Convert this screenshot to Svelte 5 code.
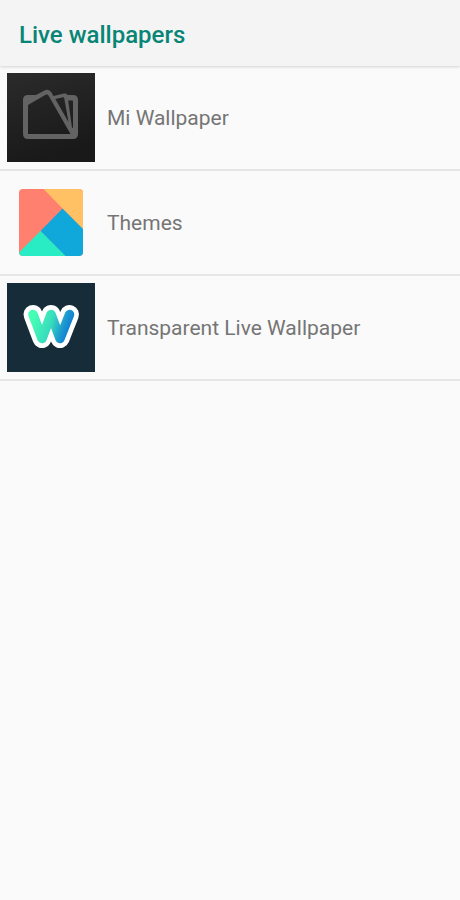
<script lang="ts">
    const wallpapers = [
        { id: 'mi', name: 'Mi Wallpaper' },
        { id: 'themes', name: 'Themes' },
        { id: 'transparent', name: 'Transparent Live Wallpaper' }
    ];

    let selected = $state('');
</script>

<header>
    <h1>Live wallpapers</h1>
</header>

<main>
    <ul>
        {#each wallpapers as wallpaper}
            <li>
                <button class:selected={selected === wallpaper.id} onclick={() => (selected = wallpaper.id)}>
                    <svg class="thumb" viewBox="0 0 88 89" aria-hidden="true">
                        {#if wallpaper.id === 'mi'}
                            <defs>
                                <linearGradient id="mi-bg" x1="0" y1="0" x2="0.3" y2="1">
                                    <stop offset="0" stop-color="#2b2b2b" />
                                    <stop offset="1" stop-color="#191919" />
                                </linearGradient>
                            </defs>
                            <rect width="88" height="89" fill="url(#mi-bg)" />
                            <path
                                fill="#636363"
                                fill-rule="evenodd"
                                d="M16 27Q16 22 21 22H29L37.500 17.500Q42 15.500 44.500 19.500L46.500 23L57 20.600Q59.500 20.300 60.500 22H66Q71 22 71 27V61Q71 66 66 66H21Q16 66 16 61Z
                                M21 32L39 21.600Q40.500 21 41.500 22.500L63.500 61H21Z
                                M48.300 26L56 24.300Q57 24.200 57.200 25.200L61.500 49Z
                                M61.200 27.500H65Q66 27.500 66 28.500V55L65 54.500Z"
                            />
                        {:else if wallpaper.id === 'themes'}
                            <defs>
                                <clipPath id="themes-clip">
                                    <rect x="12" y="11" width="64" height="67" rx="4" />
                                </clipPath>
                            </defs>
                            <g clip-path="url(#themes-clip)">
                                <rect x="12" y="11" width="64" height="67" fill="#ff806f" />
                                <path fill="#ffc163" d="M36.500 11H76V51.500Z" />
                                <path fill="#10a8db" d="M55.500 30.500L76 51V78H58L33.500 53Z" />
                                <path fill="#29ebc4" d="M12 74.500L33.500 53L58.500 78H12Z" />
                            </g>
                        {:else}
                            <defs>
                                <linearGradient id="w-fill" gradientUnits="userSpaceOnUse" x1="26" y1="34" x2="66" y2="48">
                                    <stop offset="0" stop-color="#45ffb4" />
                                    <stop offset="0.450" stop-color="#39dcbd" />
                                    <stop offset="0.750" stop-color="#1d98cf" />
                                    <stop offset="1" stop-color="#0b70d4" />
                                </linearGradient>
                            </defs>
                            <rect width="88" height="89" fill="#162c39" />
                            <g fill="none" stroke-linejoin="round" stroke-linecap="round">
                                <path stroke="#fff" stroke-width="19" d="M26 31.500L35 55.500L44 31.500L53 55.500L62.500 31.500" />
                                <path stroke="url(#w-fill)" stroke-width="9.500" d="M26 31.500L35 55.500L44 31.500L53 55.500L62.500 31.500" />
                            </g>
                        {/if}
                    </svg>
                    <span>{wallpaper.name}</span>
                </button>
            </li>
        {/each}
    </ul>
</main>

<style>
    :global(body) {
        margin: 0;
        background: #fafafa;
        font-family: Roboto, 'Liberation Sans', sans-serif;
    }

    header {
        display: flex;
        align-items: center;
        height: 66px;
        padding: 0 19px;
        background: #f4f4f4;
        box-shadow: 0 1px 3px rgba(0, 0, 0, 0.16);
    }

    h1 {
        margin: 0;
        padding-top: 4px;
        color: #088576;
        font-size: 24px;
        font-weight: 500;
        line-height: 32px;
    }

    ul {
        list-style: none;
        margin: 0;
        padding: 0;
    }

    li {
        border-bottom: 2px solid #e6e6e6;
    }

    button {
        display: flex;
        align-items: center;
        gap: 12px;
        width: 100%;
        padding: 7px;
        border: none;
        background: transparent;
        color: #757575;
        font-family: inherit;
        font-size: 21px;
        line-height: 28px;
        text-align: left;
        cursor: pointer;
    }

    button:hover,
    button.selected {
        background: #f0f0f0;
    }

    .thumb {
        flex: none;
        width: 88px;
        height: 89px;
    }
</style>
